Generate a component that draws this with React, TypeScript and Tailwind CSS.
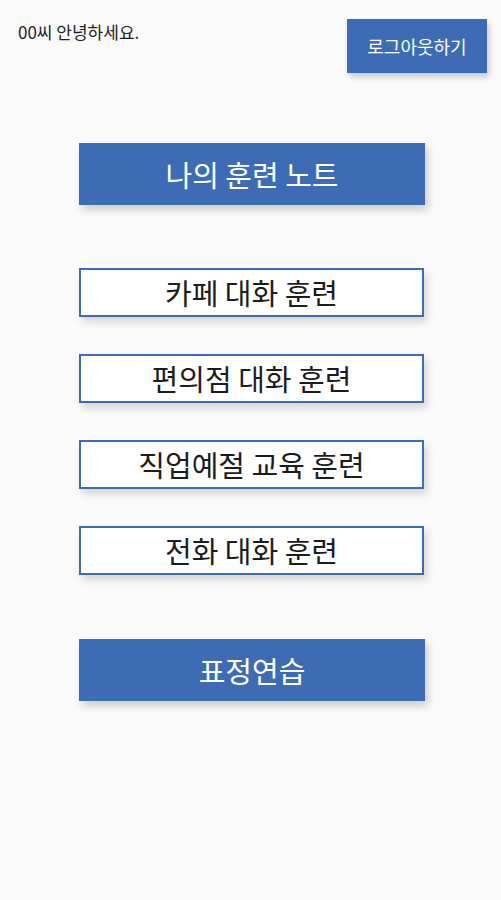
const font = { fontFamily: '"Noto Sans CJK KR", "Noto Sans", sans-serif' }

const trainings = ['카페 대화 훈련', '편의점 대화 훈련', '직업예절 교육 훈련', '전화 대화 훈련']

export default function App() {
  return (
    <div className="w-[501px] h-[900px] bg-[#fafafa] text-[#222]" style={font}>
      <div className="flex justify-between items-start pl-[18px] pr-[14px] pt-[19px]">
        <p className="text-[17px] leading-none mt-[4px]">00씨 안녕하세요.</p>
        <button className="w-[140px] h-[54px] bg-[#3e6cb4] text-white text-[18px] shadow-[2px_4px_6px_rgba(0,0,0,0.2)]">
          로그아웃하기
        </button>
      </div>

      <div className="flex flex-col ml-[79px] w-[346px] mt-[70px]">
        <button className="h-[62px] bg-[#3e6cb4] text-white text-[29px] leading-none shadow-[3px_5px_8px_rgba(0,0,0,0.18)]">
          나의 훈련 노트
        </button>

        <div className="flex flex-col gap-[37px] mt-[63px] pr-[1px]">
          {trainings.map((t) => (
            <button
              key={t}
              className="h-[49px] bg-white border-2 border-[#3d6bb6] text-[29px] leading-none text-[#1c1c1c] shadow-[3px_5px_8px_rgba(0,0,0,0.15)]"
            >
              {t}
            </button>
          ))}
        </div>

        <button className="h-[62px] mt-[64px] bg-[#3e6cb4] text-white text-[29px] leading-none shadow-[3px_5px_8px_rgba(0,0,0,0.18)]">
          표정연습
        </button>
      </div>
    </div>
  )
}
